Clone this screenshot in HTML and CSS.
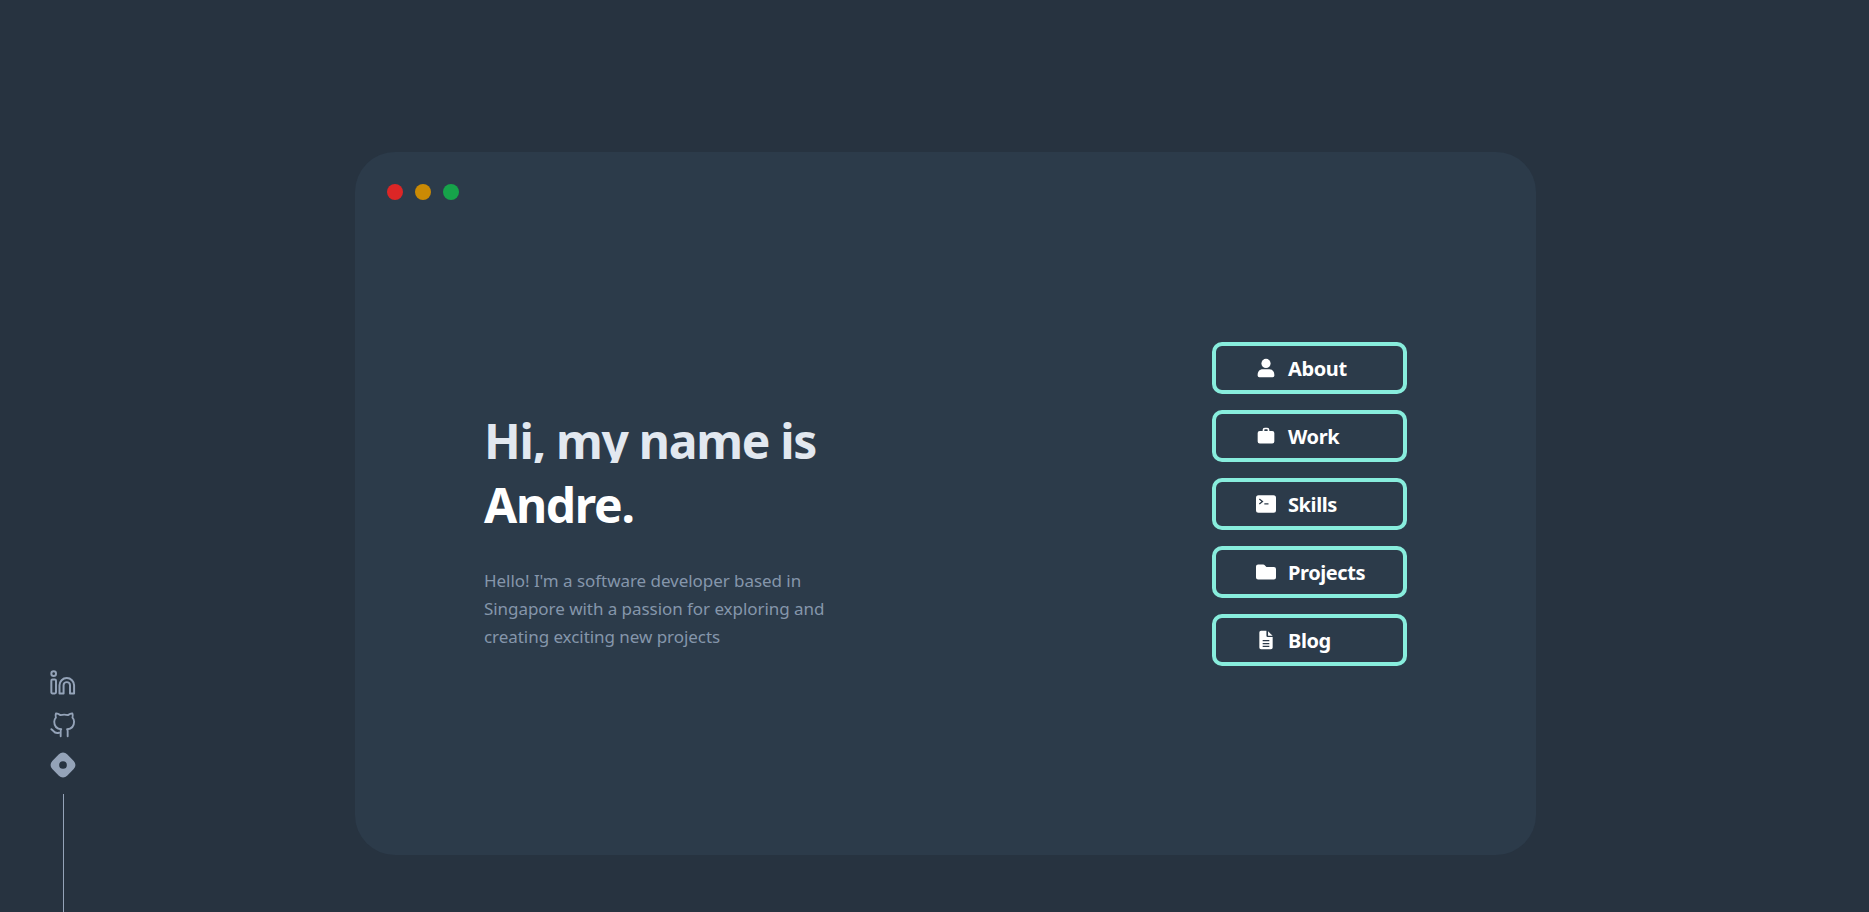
FILE: index.html
```html
<!DOCTYPE html>
<html>
<head>
    <meta charset="utf-8">
    <title>Andre</title>
    <link rel="stylesheet" href="styles.css">
</head>
<body>
    <div class="socials">
        <a href="#" class="social-link">
            <svg viewBox="0 0 24 24" fill="none" stroke="currentColor" stroke-width="1.700" stroke-linecap="round" stroke-linejoin="round">
                <rect x="2" y="9" width="4" height="12" rx="1"></rect>
                <circle cx="4" cy="4" r="2"></circle>
                <path d="M9 21V14a6 6 0 0 1 12.500 0v7h-3.500v-7a2.700 2.700 0 0 0-5.500 0v7z"></path>
            </svg>
        </a>
        <a href="#" class="social-link">
            <svg viewBox="0 0 24 24" fill="none" stroke="currentColor" stroke-width="1.600" stroke-linecap="round" stroke-linejoin="round">
                <path d="M8.500 19.500c-4.500 1.400-4.500-2.500-6.500-3m14 6v-4c0-1 .1-1.400-.5-2 3-.3 6-1.500 6-6.500a5 5 0 0 0-1.400-3.500 4.600 4.600 0 0 0-.1-3.500s-1.200-.3-3.800 1.400a13.500 13.500 0 0 0-6.400 0C7.200 2.700 6 3 6 3a4.600 4.600 0 0 0-.1 3.500A5 5 0 0 0 4.500 10c0 5 3 6.200 6 6.500-.6.600-.6 1.300-.5 2v4"></path>
            </svg>
        </a>
        <a href="#" class="social-link">
            <svg viewBox="0 0 24 24" fill="currentColor">
                <rect x="3" y="3" width="18" height="18" rx="5" transform="rotate(45 12 12)"></rect>
                <circle class="social-hole" cx="12" cy="12" r="3.300"></circle>
            </svg>
        </a>
        <div class="social-line"></div>
    </div>

    <div class="card">
        <div class="dots">
            <span class="dot dot-red"></span>
            <span class="dot dot-yellow"></span>
            <span class="dot dot-green"></span>
        </div>

        <div class="content">
            <div class="intro">
                <h1>
                    <span class="greeting">Hi, my name is</span>
                    <span class="name">Andre.</span>
                </h1>
                <p>Hello! I'm a software developer based in Singapore with a passion for exploring and creating exciting new projects</p>
            </div>

            <nav class="menu">
                <a href="#" class="menu-btn">
                    <svg class="menu-icon" viewBox="0 0 24 24" fill="currentColor">
                        <circle cx="12" cy="6.500" r="5.500"></circle>
                        <path d="M2 20c0-4 2.500-6.500 6-6.500h8c3.500 0 6 2.500 6 6.500v1a2 2 0 0 1-2 2H4a2 2 0 0 1-2-2z"></path>
                    </svg>
                    About
                </a>
                <a href="#" class="menu-btn">
                    <svg class="menu-icon" viewBox="0 0 24 24" fill="currentColor">
                        <path fill-rule="evenodd" d="M8 6V4.500A2.500 2.500 0 0 1 10.500 2h3A2.500 2.500 0 0 1 16 4.500V6h3.500A2.500 2.500 0 0 1 22 8.500v10a2.500 2.500 0 0 1-2.500 2.500h-15A2.500 2.500 0 0 1 2 18.500v-10A2.500 2.500 0 0 1 4.500 6zm2 0h4V4.500a.5.5 0 0 0-.5-.5h-3a.5.5 0 0 0-.5.5z"></path>
                    </svg>
                    Work
                </a>
                <a href="#" class="menu-btn">
                    <svg class="menu-icon" viewBox="0 0 24 24" fill="currentColor">
                        <path fill-rule="evenodd" d="M3 1.500h18a3 3 0 0 1 3 3v15a3 3 0 0 1-3 3H3a3 3 0 0 1-3-3v-15a3 3 0 0 1 3-3zm1.500 4-1 1 3 2.500-3 2.500 1 1 4.500-3.500zM10 11v1.500h5V11z"></path>
                    </svg>
                    Skills
                </a>
                <a href="#" class="menu-btn">
                    <svg class="menu-icon" viewBox="0 0 24 24" fill="currentColor">
                        <path d="M2.500 3h6.300a2 2 0 0 1 1.400.6L12.500 6h9A2.500 2.500 0 0 1 24 8.500v10a2.500 2.500 0 0 1-2.500 2.500h-19A2.500 2.500 0 0 1 0 18.500v-13A2.500 2.500 0 0 1 2.500 3z"></path>
                    </svg>
                    Projects
                </a>
                <a href="#" class="menu-btn">
                    <svg class="menu-icon" viewBox="0 0 24 24" fill="currentColor">
                        <path fill-rule="evenodd" d="M6 1h6.500v6a1.500 1.500 0 0 0 1.500 1.500h6v12.500a2 2 0 0 1-2 2H6a2 2 0 0 1-2-2V3a2 2 0 0 1 2-2zm2 11v1.500h8V12zm0 3.500V17h8v-1.500zm0 3.500v1.500h8V19z"></path>
                        <path d="M14.500 1.500 20 7h-5.500z"></path>
                    </svg>
                    Blog
                </a>
            </nav>
        </div>
    </div>
</body>
</html>
```
FILE: styles.css
```css
* {
    box-sizing: border-box;
}
html, body {
    height: 100%;
}
body {
    margin: 0;
    padding: 152px 0 0 355px;
    overflow: hidden;
    background: #273340;
    font-family: "Noto Sans", "Open Sans", Arial, sans-serif;
}
.socials {
    position: fixed;
    left: 49px;
    bottom: 0;
    width: 28px;
    display: flex;
    flex-direction: column;
    align-items: center;
    gap: 13px;
    color: #94a3b8;
}
.social-link {
    display: block;
    width: 28px;
    height: 28px;
    color: inherit;
}
.social-link svg {
    display: block;
    width: 100%;
    height: 100%;
}
.social-hole {
    fill: #273340;
}
.social-line {
    width: 1px;
    height: 118px;
    margin-top: 2px;
    background: #94a3b8;
}
.card {
    width: 1181px;
    height: 703px;
    display: flex;
    flex-direction: column;
    padding-bottom: 80px;
    background: #2c3b4a;
    border-radius: 40px;
}
.dots {
    display: flex;
    gap: 12px;
    padding: 32px;
}
.dot {
    width: 16px;
    height: 16px;
    border-radius: 50%;
}
.dot-red {
    background: #dc2626;
}
.dot-yellow {
    background: #ca8a04;
}
.dot-green {
    background: #16a34a;
}
.content {
    flex: 1;
    display: flex;
    align-items: center;
    justify-content: space-between;
    padding: 0 129px;
}
.intro {
    width: 360px;
    padding-top: 53px;
}
h1 {
    margin: 0 0 30px;
    font-size: 48px;
    font-weight: 700;
    line-height: 64px;
    letter-spacing: -1.300px;
}
.greeting {
    display: block;
    height: 54px;
    margin-bottom: 10px;
    overflow: hidden;
    color: #e2e8f0;
    white-space: nowrap;
}
.name {
    display: block;
    color: #fff;
}
.intro p {
    margin: 0;
    font-size: 17px;
    line-height: 28px;
    letter-spacing: -0.050px;
    color: #8596ab;
}
.menu {
    display: flex;
    flex-direction: column;
    gap: 16px;
}
.menu-btn {
    display: flex;
    align-items: center;
    width: 195px;
    height: 52px;
    padding: 2px 0 0 40px;
    border: 4px solid #88eddd;
    border-radius: 10px;
    color: #fff;
    font-size: 20px;
    font-weight: 700;
    letter-spacing: -0.400px;
    text-decoration: none;
}
.menu-icon {
    width: 20px;
    height: 20px;
    margin: -2px 12px 0 0;
    flex-shrink: 0;
}
```
